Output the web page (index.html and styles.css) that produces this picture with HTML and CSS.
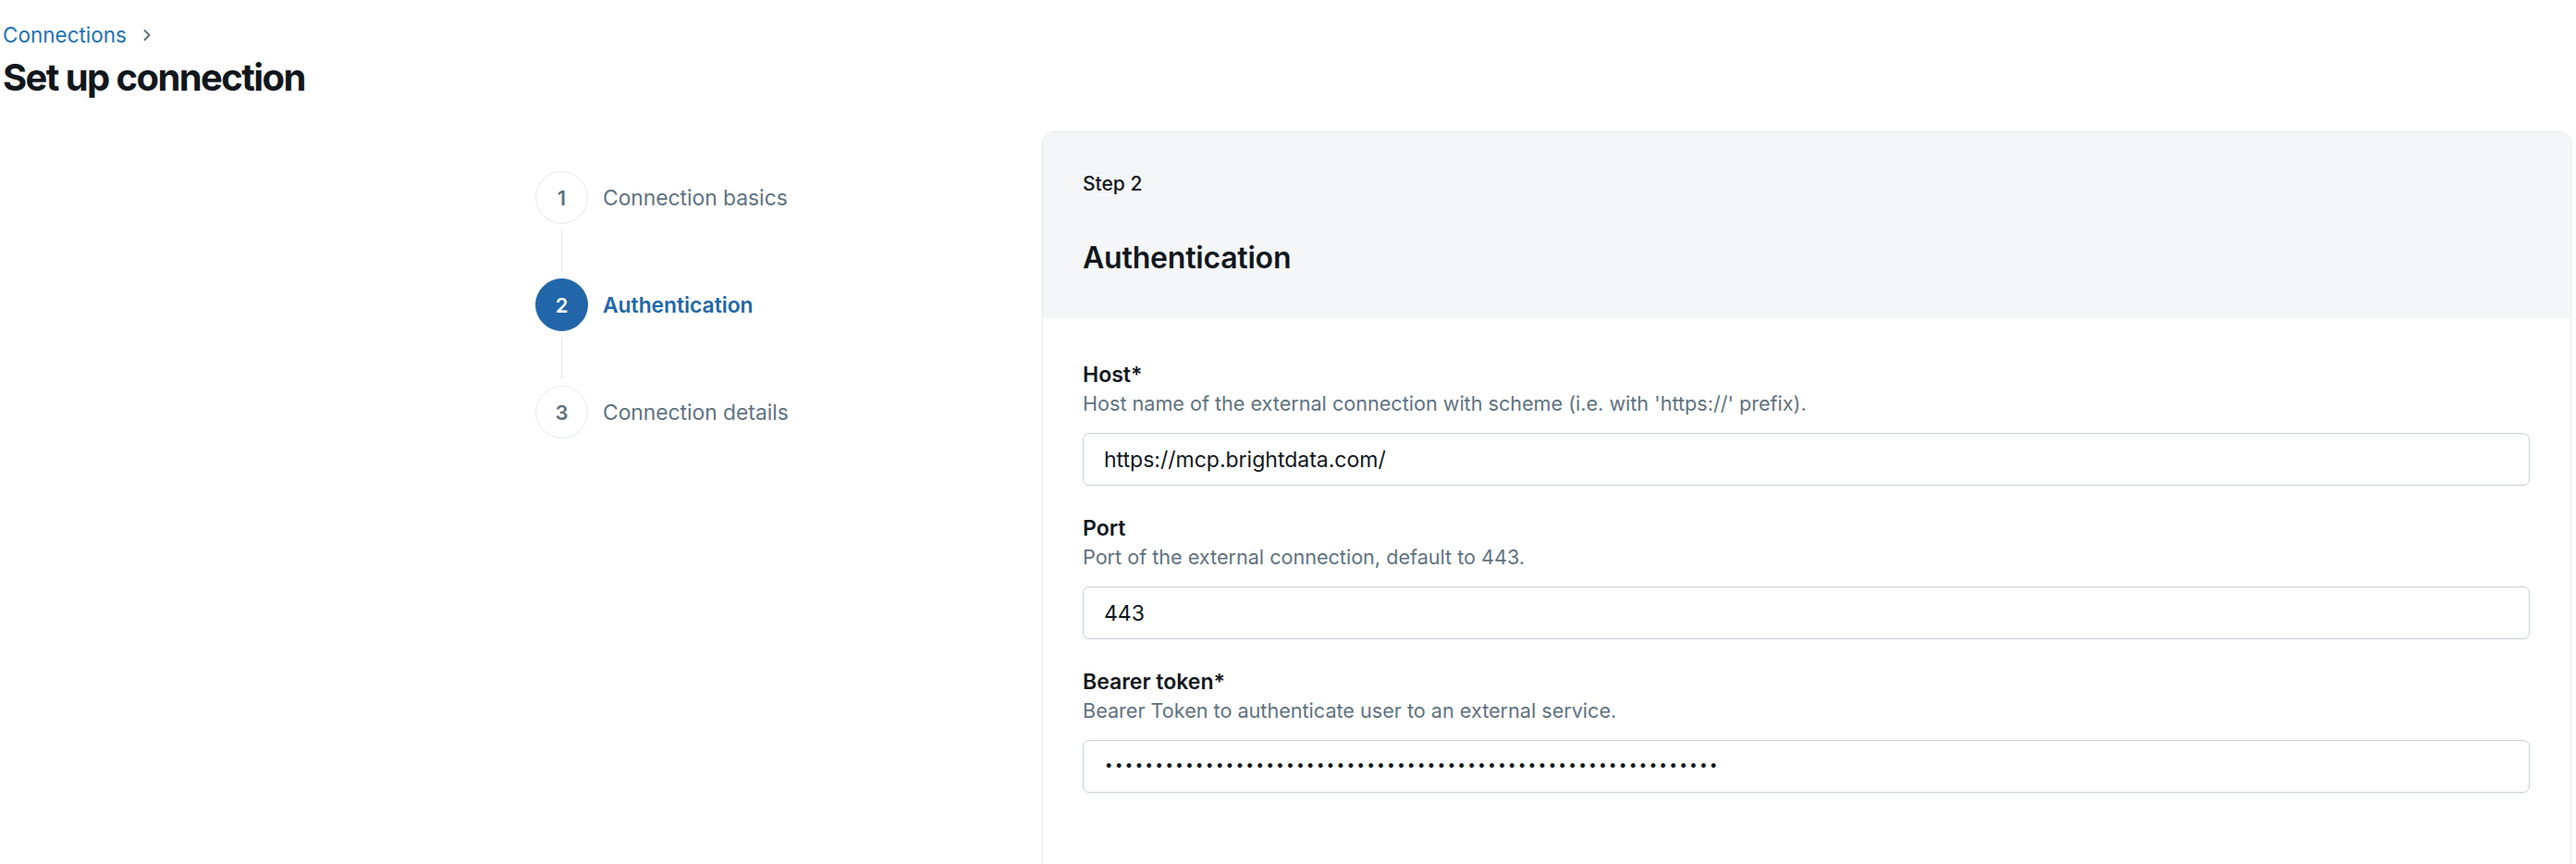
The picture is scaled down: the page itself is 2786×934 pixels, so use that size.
FILE: index.html
```html
<!DOCTYPE html>
<html lang="en">
<head>
<meta charset="utf-8">
<title>Set up connection</title>
<link rel="stylesheet" href="styles.css">
</head>
<body>
<div class="page">
  <nav class="breadcrumb">
    <a class="crumb-link" href="#">Connections</a>
    <svg class="crumb-chevron" width="10" height="14" viewBox="0 0 10 14" aria-hidden="true"><path d="M2.5 2 L7.5 7 L2.5 12" fill="none" stroke="#5f7281" stroke-width="2" stroke-linecap="round" stroke-linejoin="round"/></svg>
  </nav>
  <h1 class="page-title">Set up connection</h1>

  <div class="layout">
    <aside class="stepper-col">
      <ol class="stepper">
        <li class="step">
          <span class="step-circle">1</span>
          <span class="step-label">Connection basics</span>
        </li>
        <li class="step-connector"><span class="step-line"></span></li>
        <li class="step step-active">
          <span class="step-circle">2</span>
          <span class="step-label">Authentication</span>
        </li>
        <li class="step-connector"><span class="step-line"></span></li>
        <li class="step">
          <span class="step-circle">3</span>
          <span class="step-label">Connection details</span>
        </li>
      </ol>
    </aside>

    <section class="card">
      <header class="card-header">
        <div class="step-caption">Step 2</div>
        <h2 class="card-title">Authentication</h2>
      </header>
      <div class="card-body">
        <div class="field">
          <label class="field-label" for="host">Host*</label>
          <div class="field-desc">Host name of the external connection with scheme (i.e. with 'https://' prefix).</div>
          <input class="input" id="host" type="text" value="https://mcp.brightdata.com/">
        </div>
        <div class="field">
          <label class="field-label" for="port">Port</label>
          <div class="field-desc">Port of the external connection, default to 443.</div>
          <input class="input" id="port" type="text" value="443">
        </div>
        <div class="field">
          <label class="field-label" for="token">Bearer token*</label>
          <div class="field-desc">Bearer Token to authenticate user to an external service.</div>
          <input class="input input-password" id="token" type="password" value="aaaaaaaaaaaaaaaaaaaaaaaaaaaaaaaaaaaaaaaaaaaaaaaaaaaaaaaaaaaaa">
        </div>
      </div>
    </section>
  </div>
</div>
</body>
</html>
```

FILE: styles.css
```css
* { box-sizing: border-box; }

html, body {
  margin: 0;
  padding: 0;
  background: #ffffff;
  overflow: hidden;
}

body {
  font-family: Inter, "Noto Sans", "Liberation Sans", sans-serif;
  color: #11171c;
}

.page {
  padding: 22px 5px 0 3px;
}

.breadcrumb {
  display: flex;
  align-items: center;
  gap: 17px;
  height: 32px;
}

.crumb-link {
  color: #2272b4;
  text-decoration: none;
  font-size: 22.5px;
  line-height: 32px;
}

.crumb-chevron {
  display: block;
}

.page-title {
  margin: 2px 0 0 0;
  font-size: 40px;
  line-height: 56px;
  font-weight: 700;
  letter-spacing: -1.6px;
  color: #11171c;
}

.layout {
  display: grid;
  grid-template-columns: 1124px 1fr;
  margin-top: 30px;
}

.stepper-col {
  padding: 43px 0 0 576px;
}

.stepper {
  list-style: none;
  margin: 0;
  padding: 0;
  display: flex;
  flex-direction: column;
}

.step {
  display: flex;
  align-items: center;
  gap: 16px;
  height: 57px;
}

.step-circle {
  width: 57px;
  height: 57px;
  border-radius: 50%;
  border: 1.5px solid #e4e9ee;
  display: flex;
  align-items: center;
  justify-content: center;
  font-size: 22px;
  font-weight: 600;
  color: #5f7281;
  background: #ffffff;
  flex: none;
}

.step-label {
  font-size: 22.8px;
  color: #5f7281;
}

.step-active .step-circle {
  background: #2066a8;
  border-color: #2066a8;
  color: #ffffff;
}

.step-active .step-label {
  color: #2066a8;
  font-weight: 600;
}

.step-connector {
  height: 59px;
  width: 57px;
  display: flex;
  justify-content: center;
  padding: 7px 0;
}

.step-line {
  width: 1.5px;
  background: #dfe5ea;
}

.card {
  border: 1px solid #e6e9ed;
  border-radius: 12px;
  min-height: 900px;
  overflow: hidden;
  background: #ffffff;
}

.card-header {
  background: #f5f6f8;
  padding: 41px 43px 43px 43px;
}

.step-caption {
  font-size: 21px;
  line-height: 30px;
  font-weight: 500;
  color: #11171c;
}

.card-title {
  margin: 43px 0 0 0;
  font-size: 32px;
  line-height: 44px;
  font-weight: 600;
  letter-spacing: -0.2px;
  color: #11171c;
}

.card-body {
  padding: 45px 44px 0 43px;
  display: flex;
  flex-direction: column;
  gap: 30px;
}

.field {
  display: flex;
  flex-direction: column;
}

.field-label {
  font-size: 23px;
  line-height: 32px;
  font-weight: 600;
  color: #11171c;
}

.field-desc {
  font-size: 21.6px;
  line-height: 30px;
  color: #5f7281;
  margin-bottom: 17px;
}

.input {
  display: block;
  width: 100%;
  height: 57px;
  border: 1.5px solid #c5d0da;
  border-radius: 7px;
  padding: 0 22px;
  font-family: Inter, "Noto Sans", "Liberation Sans", sans-serif;
  font-size: 23px;
  color: #11171c;
  background: #ffffff;
  outline: none;
}

.input-password {
  font-family: "Liberation Sans", sans-serif;
  font-size: 18px;
  letter-spacing: 4.6px;
  padding-left: 24px;
}
```
